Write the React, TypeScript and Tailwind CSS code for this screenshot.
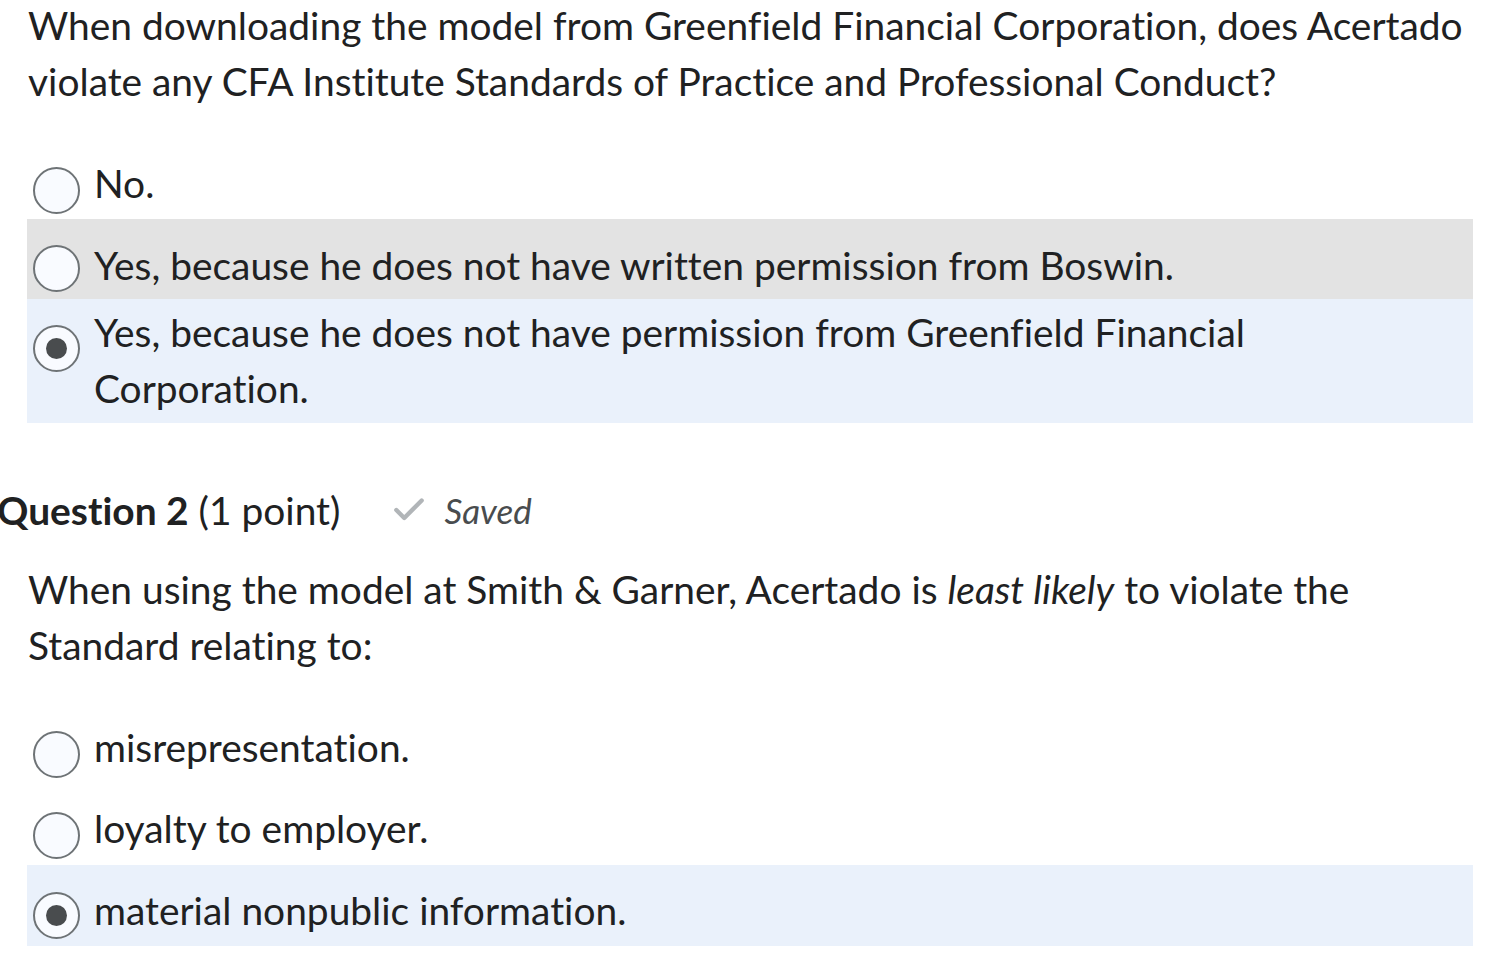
import { Check } from "lucide-react";

type Opt = {
  label: string;
  checked?: boolean;
  row: string;
  radio: string;
};

const q1: Opt[] = [
  { label: "No.", row: "pt-[5px] pb-[5px]", radio: "mt-[12px]" },
  {
    label: "Yes, because he does not have written permission from Boswin.",
    row: "bg-[#e3e3e3] pt-[18px] pb-[6px]",
    radio: "mt-[8px]",
  },
  {
    label: "Yes, because he does not have permission from Greenfield Financial Corporation.",
    checked: true,
    row: "bg-[#eaf1fb] pt-[5px] pb-[7px]",
    radio: "mt-[21px]",
  },
];

const q2: Opt[] = [
  { label: "misrepresentation.", row: "pt-[46px] pb-[22px]", radio: "mt-[12px]" },
  { label: "loyalty to employer.", row: "pt-[0px] pb-[6px]", radio: "mt-[12px]" },
  {
    label: "material nonpublic information.",
    checked: true,
    row: "bg-[#eaf1fb] pt-[17px] pb-[7px]",
    radio: "mt-[10px]",
  },
];

function Radio({ checked, className }: { checked?: boolean; className: string }) {
  return (
    <div
      className={`grid h-[47px] w-[47px] shrink-0 place-items-center rounded-full border-2 border-[#6e7376] bg-[#f9fbff] ${className}`}
    >
      {checked && <div className="h-[21px] w-[21px] rounded-full bg-[#494c4e]" />}
    </div>
  );
}

function Options({ items }: { items: Opt[] }) {
  return (
    <div className="mr-[33px] ml-[27px]">
      {items.map((o) => (
        <div key={o.label} className={`flex items-start gap-[14px] pl-[6px] ${o.row}`}>
          <Radio checked={o.checked} className={o.radio} />
          <div className="pr-[200px]">{o.label}</div>
        </div>
      ))}
    </div>
  );
}

export default function App() {
  return (
    <div className="min-h-screen overflow-hidden bg-white font-['Lato',sans-serif] text-[38.9px] leading-[56px] text-[#202122] [font-variant-ligatures:none]">
      <p className="mt-[-3px] ml-[28px] mr-[20px]">
        When downloading the model from Greenfield Financial Corporation, does Acertado
        <br />
        violate any CFA Institute Standards of Practice and Professional Conduct?
      </p>

      <div className="mt-[41px]">
        <Options items={q1} />
      </div>

      <div className="mt-[59px] ml-[-3px] flex items-center">
        <span className="font-bold">Question 2</span>
        <span className="ml-[10px]">(1 point)</span>
        <Check className="ml-[50px] h-[38px] w-[38px] text-[#b1b5b8]" strokeWidth={2.75} />
        <span className="ml-[16px] text-[35px] italic text-[#494c4e]">Saved</span>
      </div>

      <p className="mt-[23px] ml-[28px] mr-[20px]">
        When using the model at Smith &amp; Garner, Acertado is <em>least likely</em> to violate the
        <br />
        Standard relating to:
      </p>

      <Options items={q2} />
    </div>
  );
}
